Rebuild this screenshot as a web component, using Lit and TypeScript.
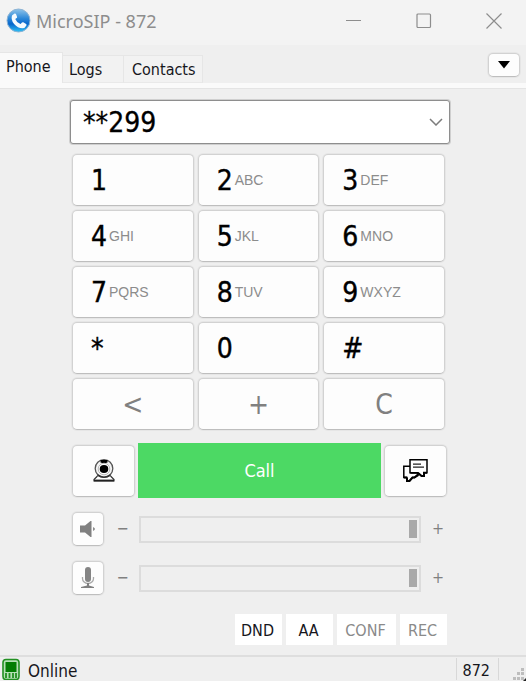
import { LitElement, html, css, svg } from "lit";
import { customElement, state } from "lit/decorators.js";

const KEYS: [string, string][] = [
  ["1", ""], ["2", "ABC"], ["3", "DEF"],
  ["4", "GHI"], ["5", "JKL"], ["6", "MNO"],
  ["7", "PQRS"], ["8", "TUV"], ["9", "WXYZ"],
  ["*", ""], ["0", ""], ["#", ""],
];

const speakerIcon = html`<svg width="16" height="16" viewBox="0 0 16 16" aria-hidden="true">
  <path d="M0 4.500h5L10.500 0h1v16h-1L5 11.500H0z" fill="#808080" />
  <path d="M13 6q4 2 0 4z" fill="#8c8c8c" />
</svg>`;

const micIcon = html`<svg width="16" height="22" viewBox="0 0 16 22" aria-hidden="true">
  <rect x="5" y="0" width="6" height="15" rx="3" fill="#848484" />
  <path d="M2.500 10v1.500a5.500 5 0 0 0 11 0V10" fill="none" stroke="#a8a8a8" stroke-width="1.300" />
  <path d="M7 16h2v2.500l5 1.500v1H1v-1l6-1.500z" fill="#808080" />
</svg>`;

@customElement("app-root")
export class AppRoot extends LitElement {
  @state() private dialed = "**299";
  @state() private tab = "Phone";

  static styles = css`
    :host {
      display: flex;
      flex-direction: column;
      min-height: 100vh;
      background: #efefef;
      color: #16161c;
      font: 16px/20px "DejaVu Sans Condensed", "DejaVu Sans", sans-serif;
    }
    * { box-sizing: border-box; }
    button, input { font: inherit; color: inherit; margin: 0; padding: 0; }
    svg { display: block; flex: none; }

    .titlebar {
      display: flex;
      align-items: center;
      height: 45px;
      padding: 0 7px 4px 6px;
      background: #f3f3f3;
      color: #8d8d8d;
      font: 18px/24px "Noto Sans", sans-serif;
    }
    .title { flex: 1; margin: 0 0 0 5px; font: inherit; }
    .window-button {
      display: grid;
      place-items: center;
      width: 50px;
      height: 40px;
      border: 0;
      background: none;
    }
    .window-buttons { display: flex; gap: 20px; }

    .tabs {
      display: flex;
      align-items: flex-end;
      height: 43px;
      padding-right: 6px;
      border-bottom: 5px solid #fafafa;
      box-shadow: 0 1px 0 #e4e4e4;
    }
    .tab {
      height: 28px;
      padding: 2px 6px 0 8px;
      text-align: left;
      border: 1px solid #e6e6e6;
      border-left: 0;
      border-bottom-color: #e9e9e9;
      background: #f2f2f2;
    }
    .tab.wide { width: 61px; padding-left: 6px; }
    .tab.active {
      width: 63px;
      height: 31px;
      padding: 0 6px 2px;
      border-bottom: 0;
      background: #fafafa;
    }
    .menu {
      display: grid;
      place-items: center;
      width: 32px;
      height: 24px;
      margin: 0 0 6px auto;
    }

    .raised {
      border: 1px solid #d2d2d2;
      border-bottom-color: #bebebe;
      border-radius: 5px;
      background: #fdfdfd;
      box-shadow: 0 0 0 1px #e6e6e6;
    }

    main { flex: 1; padding: 12px 76px 10px 70px; }
    .combo {
      display: flex;
      align-items: center;
      height: 44px;
      border: 1px solid #8e8e8e;
      border-radius: 3px;
      background: #fff;
      box-shadow: 0 0 0 1px #cfcfcf;
    }
    .number {
      flex: 1;
      min-width: 0;
      height: 40px;
      padding-left: 12px;
      border: 0;
      outline: 0;
      background: none;
      color: #000;
      font-size: 28px;
      -webkit-text-stroke: 0.3px;
    }
    .drop { width: 26px; height: 40px; border: 0; background: none; display: grid; place-items: center; }

    .keypad {
      display: grid;
      grid-template-columns: repeat(3, 1fr);
      gap: 4px;
      margin: 10px 5px 0 2px;
    }
    .key {
      display: flex;
      align-items: center;
      height: 52px;
      padding: 2px 0 0 18px;
      color: #000;
      font-size: 28px;
    }
    .digit { -webkit-text-stroke: 0.4px; }
    .letters { margin: 0 0 2px 2px; color: #8c8c8c; font: 14px/20px "Liberation Sans", sans-serif; }
    .edit { justify-content: center; padding-left: 0; color: #808080; }

    .actions {
      display: flex;
      align-items: center;
      gap: 3px;
      margin: 13px 3px 0 2px;
    }
    .square { display: grid; place-items: center; width: 63px; height: 52px; }
    .call {
      flex: 1;
      height: 55px;
      padding-top: 1px;
      border: 0;
      background: #4cd964;
      color: #fff;
      font-size: 18px;
    }

    .level {
      display: flex;
      align-items: center;
      height: 36px;
      margin: 13px 3px 0 2px;
      color: #808080;
    }
    .mute { display: grid; place-items: center; width: 32px; height: 34px; }
    .sign { width: 35px; padding-left: 2px; text-align: center; }
    .sign.more { width: 18px; margin-left: 8px; padding: 0; }
    .slider {
      flex: 1;
      min-width: 0;
      height: 27px;
      padding: 0 2px;
      border: 2px solid #dcdcdc;
      background: #efefef;
      appearance: none;
    }
    .slider::-webkit-slider-thumb {
      appearance: none;
      width: 8px;
      height: 18px;
      border: 0;
      background: #a9a9a9;
    }

    .toggles { display: flex; justify-content: flex-end; gap: 4px; margin: 18px 3px 0 0; }
    .toggle { width: 47px; height: 31px; padding: 2px 2px 0 0; border: 0; background: #fff; }
    .toggle.conf { width: 59px; }
    .toggle:disabled { color: #8a8a8a; }

    .status {
      display: flex;
      align-items: center;
      height: 26px;
      border-top: 2px solid #dedede;
      padding-left: 2px;
      font-size: 17px;
    }
    .state { flex: 1; margin-left: 8px; padding-top: 4px; }
    .account {
      height: 22px;
      padding: 3px 8px 0 6px;
      border: solid #d8d8d8;
      border-width: 0 1px;
      font-size: 16px;
    }
    .grip { width: 27px; display: flex; justify-content: flex-end; align-self: flex-end; }
  `;

  private press(key: string) {
    this.dialed += key;
  }

  private level(name: string, icon: unknown) {
    return html`<div class="level">
      <button class="raised mute" aria-label="Mute ${name}">${icon}</button>
      <span class="sign">−</span>
      <input class="slider" type="range" min="0" max="100" value="100" aria-label="${name} volume" />
      <span class="sign more">+</span>
    </div>`;
  }

  render() {
    return html`
      <header class="titlebar">
        <svg width="25" height="25" viewBox="0 0 25 25" aria-hidden="true">
          <defs>
            <linearGradient id="ball" x1="0" y1="0" x2="0" y2="1">
              <stop offset="0" stop-color="#8ec4ea" />
              <stop offset=".42" stop-color="#2b87d8" />
              <stop offset=".65" stop-color="#0866cc" />
              <stop offset="1" stop-color="#2fc3f6" />
            </linearGradient>
          </defs>
          <circle cx="12.500" cy="12.500" r="11.500" fill="url(#ball)" stroke="#8fb4d4" />
          <path d="M6.200 7.200 8.600 5.500q1-.3 1.500.7l1 2.700q.1.700-.5 1.200l-1.400 1q1.600 3.800 5.300 5l1.500-1.600q.6-.5 1.300-.2l2.800 1.600q.8.600.3 1.500-1.300 2.700-4 2.900-4.700-.1-8.300-4.300Q4.300 11.200 6.200 7.200z" fill="#f6fbff" />
        </svg>
        <h1 class="title">MicroSIP - 872</h1>
        <div class="window-buttons">
          <button class="window-button" aria-label="Minimize">
            <svg width="16" height="16" viewBox="0 0 16 16"><path d="M0 7.500h15" stroke="#8d8d8d" /></svg>
          </button>
          <button class="window-button" aria-label="Maximize">
            <svg width="16" height="16" viewBox="0 0 16 16"><rect x="1" y="1" width="13.500" height="13.500" rx="1" fill="none" stroke="#8d8d8d" stroke-width="1.200" /></svg>
          </button>
          <button class="window-button" aria-label="Close">
            <svg width="16" height="16" viewBox="0 0 16 16"><path d="M.5.500l15 15M15.500.500l-15 15" stroke="#8d8d8d" stroke-width="1.200" /></svg>
          </button>
        </div>
      </header>

      <nav class="tabs" role="tablist">
        ${["Phone", "Logs", "Contacts"].map((name) => html`<button
          class="tab ${name === this.tab ? "active" : name === "Logs" ? "wide" : ""}"
          role="tab" aria-selected=${name === this.tab}
          @click=${() => (this.tab = name)}>${name}</button>`)}
        <button class="raised menu" aria-label="Menu">
          <svg width="12" height="8" viewBox="0 0 12 8"><path d="M0 0h12L6 7.500z" fill="#000" /></svg>
        </button>
      </nav>

      <main>
        <div class="combo">
          <input class="number" aria-label="Number" .value=${this.dialed}
            @input=${(e: Event) => (this.dialed = (e.target as HTMLInputElement).value)} />
          <button class="drop" aria-label="Recent numbers">
            <svg width="14" height="8" viewBox="0 0 14 8"><path d="M1 1l6 6 6-6" fill="none" stroke="#7c7c7c" stroke-width="1.500" /></svg>
          </button>
        </div>

        <div class="keypad">
          ${KEYS.map(([key, letters]) => html`<button class="raised key" @click=${() => this.press(key)}>
            <span class="digit">${key}</span>${letters ? html`<span class="letters">${letters}</span>` : ""}
          </button>`)}
          <button class="raised key edit" aria-label="Backspace" @click=${() => (this.dialed = this.dialed.slice(0, -1))}>&lt;</button>
          <button class="raised key edit" @click=${() => this.press("+")}>+</button>
          <button class="raised key edit" aria-label="Clear" @click=${() => (this.dialed = "")}>C</button>
        </div>

        <div class="actions">
          <button class="raised square" aria-label="Video call">
            <svg width="22" height="23" viewBox="0 0 22 23" aria-hidden="true">
              <path d="M4.500 17 1 20.500V22h20v-1.500L17.500 17" fill="#fff" stroke="#333" stroke-width="1.200" />
              <path d="M1 21.500h20" stroke="#222" stroke-width="1.800" />
              <circle cx="11" cy="9.500" r="8.800" fill="#f4f4f4" stroke="#555" stroke-width="1.300" />
              <path d="M4.500 16q6.500 4.500 13 0" fill="none" stroke="#333" stroke-width="1.600" />
              <path d="M7.500 1h7v2.500q-3.500 1.500-7 0z" fill="#000" />
              <circle cx="11" cy="10" r="5.800" fill="#fff" stroke="#aaa" stroke-width=".8" />
              <ellipse cx="11" cy="10" rx="4.300" ry="3.900" fill="#000" />
            </svg>
          </button>
          <button class="call">Call</button>
          <button class="raised square" aria-label="Message">
            <svg width="25" height="23" viewBox="0 0 25 23" aria-hidden="true">
              <path d="M.8 7.200H8V14h7v2.500l-3.500 2H9.500L6.500 22H4v-3.500H.8z" fill="#fff" stroke="#000" stroke-width="1.500" />
              <path d="M1 18.500h3M4 19v3h2.500l3-3.500h2l3.500-3" fill="none" stroke="#000" stroke-width="2" />
              <path d="M7 .8h17v13h-3v3h-2.500L15 13.800H7z" fill="#fff" stroke="#000" stroke-width="1.500" />
              <path d="M15 14l3.500 3H21v-3.200h3" fill="none" stroke="#000" stroke-width="2" />
              <path d="M10 5.200h8M10 8.200h11" stroke="#222" stroke-width="1.300" />
            </svg>
          </button>
        </div>

        ${this.level("Speaker", speakerIcon)}
        ${this.level("Microphone", micIcon)}

        <div class="toggles">
          <button class="toggle">DND</button>
          <button class="toggle">AA</button>
          <button class="toggle conf" disabled>CONF</button>
          <button class="toggle" disabled>REC</button>
        </div>
      </main>

      <footer class="status">
        <svg width="18" height="22" viewBox="0 0 18 22" aria-hidden="true">
          <rect x="1" y="1.500" width="16" height="20" rx="3" fill="#b6e0b6" stroke="#229022" stroke-width="1.600" />
          <rect x="3.500" y="4" width="11" height="10" fill="#047d04" />
          <path d="M4 15v5M7.500 15v5M11 15v5M14 15v5" stroke="#229022" stroke-width="1.800" />
        </svg>
        <span class="state">Online</span>
        <span class="account">872</span>
        <span class="grip">
          <svg width="14" height="14" viewBox="0 0 14 14" aria-hidden="true">
            ${[[9, 1], [5, 5], [9, 5], [1, 10], [5, 10], [9, 10]].map(
              ([x, y]) => svg`<rect x=${x} y=${y} width="3" height="3" fill="#bdbdbd" />`
            )}
            <path d="M14 11v3h-3z" fill="#222" />
          </svg>
        </span>
      </footer>
    `;
  }
}
